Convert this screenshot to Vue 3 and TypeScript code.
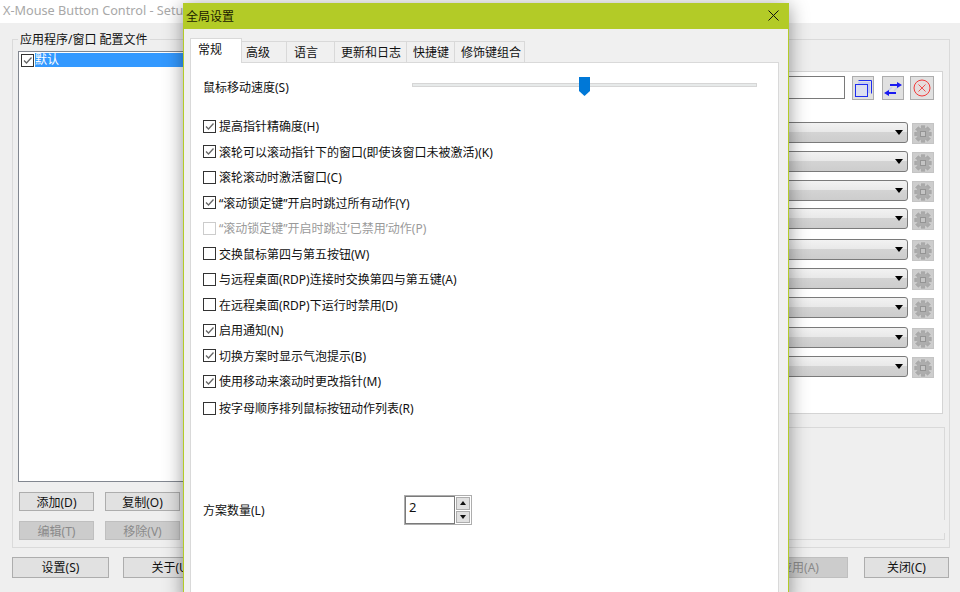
<script setup lang="ts">
interface Opt { text: string; checked?: boolean; disabled?: boolean; extra?: boolean }
const options: Opt[] = [
  { text: '提高指针精确度(H)', checked: true },
  { text: '滚轮可以滚动指针下的窗口(即使该窗口未被激活)(K)', checked: true },
  { text: '滚轮滚动时激活窗口(C)' },
  { text: '“滚动锁定键”开启时跳过所有动作(Y)', checked: true },
  { text: '“滚动锁定键”开启时跳过‘已禁用’动作(P)', disabled: true },
  { text: '交换鼠标第四与第五按钮(W)' },
  { text: '与远程桌面(RDP)连接时交换第四与第五键(A)' },
  { text: '在远程桌面(RDP)下运行时禁用(D)' },
  { text: '启用通知(N)', checked: true },
  { text: '切换方案时显示气泡提示(B)', checked: true },
  { text: '使用移动来滚动时更改指针(M)', checked: true },
  { text: '按字母顺序排列鼠标按钮动作列表(R)', extra: true },
]
const tabs = [
  { name: '常规', w: 52, pad: 7 },
  { name: '高级', w: 45, pad: 4 },
  { name: '语言', w: 48, pad: 7 },
  { name: '更新和日志', w: 72, pad: 6 },
  { name: '快捷键', w: 48, pad: 6 },
  { name: '修饰键组合', w: 70, pad: 6 },
]
const comboGaps = [0, 8, 8, 7, 10, 8, 8, 9, 8]
const gearTeeth = [0, 45, 90, 135, 180, 225, 270, 315]
</script>

<template>
  <div class="screen">
    <div class="apptitle">X-Mouse Button Control - Setup</div>
    <div class="main">
      <div class="group">
        <span class="legend">应用程序/窗口 配置文件</span>
        <div class="left">
          <div class="list">
            <div class="list-row">
              <span class="box list-box">
                <svg viewBox="0 0 11 11" class="tick"><path d="M2 5.500 L4.500 8 L9.500 2.500" /></svg>
              </span>
              <span class="sel">默认</span>
            </div>
          </div>
          <div class="btn-row">
            <button class="btn small">添加(D)</button>
            <button class="btn small">复制(O)</button>
          </div>
          <div class="btn-row">
            <button class="btn small off">编辑(T)</button>
            <button class="btn small off">移除(V)</button>
          </div>
        </div>
        <div class="right">
          <div class="panel">
            <div class="panel-top">
              <div class="textbox"></div>
              <div class="icon-btn">
                <svg viewBox="0 0 20 22" width="20" height="22">
                  <rect x="5" y="5" width="12" height="11" fill="#c3ccf2" />
                  <path d="M5.500 3.500H18.500V16.500" fill="none" stroke="#1e2cf0" />
                  <rect x="2.500" y="7.500" width="12" height="12" fill="#dcdff0" stroke="#1e2cf0" />
                </svg>
              </div>
              <div class="icon-btn gap8">
                <svg viewBox="0 0 20 22" width="20" height="22">
                  <path d="M4 15L9 10M16 9L11 14" fill="none" stroke="#c9cceb" stroke-width="1.500" />
                  <path d="M7 7H14V5L19 8 14 11V9H7Z" fill="#1a1af0" />
                  <path d="M13 15H6V13L1 16 6 19V17H13Z" fill="#1a1af0" />
                </svg>
              </div>
              <div class="icon-btn gap6">
                <svg viewBox="0 0 22 22" width="22" height="22">
                  <circle cx="11" cy="11" r="8" fill="#e6dcdc" stroke="#f23a3a" />
                  <path d="M7.500 7.500L14.500 14.500M14.500 7.500L7.500 14.500" stroke="#ef5050" />
                </svg>
              </div>
            </div>
            <div class="combos">
              <div v-for="(g, i) in comboGaps" :key="i" class="combo-row" :style="{ marginTop: g + 'px' }">
                <div class="combo"><span class="arrow"></span></div>
                <div class="gear">
                  <svg viewBox="0 0 20 20" width="20" height="20">
                    <rect
                      v-for="t in gearTeeth"
                      :key="t"
                      x="7.500"
                      y="1"
                      width="5"
                      height="4"
                      fill="#a9a9a9"
                      stroke="#dcdcdc"
                      stroke-width="0.500"
                      :transform="`rotate(${t} 10 10)`"
                    />
                    <circle cx="10" cy="10" r="6.500" fill="#adadad" />
                    <rect x="7.500" y="7.500" width="5" height="5" fill="#c4c4c4" stroke="#949494" />
                  </svg>
                </div>
              </div>
            </div>
          </div>
          <div class="lower"></div>
        </div>
      </div>
      <div class="foot">
        <button class="btn wide">设置(S)</button>
        <button class="btn wide">关于(U)</button>
        <button class="btn wide off push">应用(A)</button>
        <button class="btn close">关闭(C)</button>
      </div>
    </div>

    <div class="dialog">
      <div class="dlg-title">
        <span>全局设置</span>
        <svg class="x" viewBox="0 0 11 11" width="11" height="11">
          <path d="M.5 .5L10.500 10.500M10.500 .5L.5 10.500" stroke="#111" />
        </svg>
      </div>
      <div class="dlg-body">
        <div class="tabs">
          <div
            v-for="(t, i) in tabs"
            :key="t.name"
            class="tab"
            :class="{ active: i === 0 }"
            :style="{ width: t.w + 'px', paddingLeft: t.pad + 'px' }"
          >{{ t.name }}</div>
        </div>
        <div class="page">
          <div class="speed">
            <span class="speed-label">鼠标移动速度(S)</span>
            <div class="track">
              <svg class="thumb" viewBox="0 0 11 19" width="11" height="19">
                <path d="M0 0H11V14L5.500 19 0 14Z" fill="#0078d7" />
              </svg>
            </div>
          </div>
          <div class="opts">
            <label
              v-for="o in options"
              :key="o.text"
              class="opt"
              :class="{ dis: o.disabled, extra: o.extra }"
            >
              <span class="box">
                <svg v-if="o.checked" viewBox="0 0 11 11" class="tick"><path d="M2 5.500 L4.500 8 L9.500 2.500" /></svg>
              </span>
              <span>{{ o.text }}</span>
            </label>
          </div>
          <div class="count">
            <span class="count-label">方案数量(L)</span>
            <div class="spin">
              <div class="spin-input">2</div>
              <div class="spin-btns">
                <span class="spin-btn"><i class="up"></i></span>
                <span class="spin-btn"><i class="down"></i></span>
              </div>
            </div>
          </div>
        </div>
      </div>
    </div>
  </div>
</template>

<style scoped>
.screen {
  position: relative;
  width: 960px;
  height: 592px;
  overflow: hidden;
  background: #fff;
  font-family: "Noto Sans", "Noto Sans CJK SC", sans-serif;
  font-size: 12px;
  color: #111;
}
.apptitle {
  height: 23px;
  line-height: 20px;
  padding-left: 3px;
  font-size: 12.700px;
  color: #a8a8a8;
  white-space: nowrap;
}
.main {
  height: 569px;
  box-sizing: border-box;
  background: #efefef;
  padding: 16px 10px 0 12px;
}
.group {
  position: relative;
  box-sizing: border-box;
  height: 509px;
  border: 1px solid #dadada;
  display: flex;
}
.legend {
  position: absolute;
  left: 5px;
  top: -8px;
  padding: 0 2px;
  line-height: 16px;
  background: #efefef;
}
.left {
  width: 172px;
  padding: 11px 0 0 5px;
  flex: none;
}
.list {
  box-sizing: border-box;
  width: 172px;
  height: 431px;
  border: 1px solid #828790;
  background: #fff;
  padding: 1px 0 0 2px;
}
.list-row {
  display: flex;
  align-items: center;
  height: 14px;
}
.list-box {
  margin-right: 1px;
}
.sel {
  flex: 1;
  height: 14px;
  line-height: 13px;
  background: #3399ff;
  color: #fff;
}
.btn-row {
  display: flex;
  gap: 11px;
  margin-top: 10px;
  padding-left: 1px;
}
.btn {
  box-sizing: border-box;
  font: inherit;
  color: #111;
  padding: 0;
  border: 1px solid #adadad;
  background: #e1e1e1;
}
.btn.off {
  background: #cccccc;
  border-color: #bfbfbf;
  color: #8a8a8a;
}
.small {
  width: 75px;
  height: 19px;
  line-height: 16px;
  padding-top: 2px;
}
.right {
  flex: 1;
  min-width: 0;
  padding: 31px 0 0 18px;
}
.panel {
  box-sizing: border-box;
  height: 343px;
  margin-right: 6px;
  border: 1px solid #d4d4d4;
  background: #fff;
  padding: 4px 8px 0 0;
}
.panel-top {
  display: flex;
  justify-content: flex-end;
  height: 24px;
}
.textbox {
  box-sizing: border-box;
  flex: 1;
  height: 23px;
  border: 1px solid #7a7a7a;
  background: #fff;
  margin-right: 7px;
}
.icon-btn {
  box-sizing: border-box;
  width: 22px;
  height: 24px;
  border: 1px solid #adadad;
  background: #e1e1e1;
  display: flex;
  align-items: center;
  justify-content: center;
  flex: none;
}
.icon-btn.gap8 {
  margin-left: 8px;
}
.icon-btn.gap6 {
  margin-left: 6px;
  width: 24px;
}
.combos {
  margin-top: 22px;
}
.combo-row {
  display: flex;
  gap: 4px;
}
.combo {
  position: relative;
  box-sizing: border-box;
  flex: 1;
  height: 21px;
  border: 1px solid #7a7a7a;
  border-radius: 3px;
  background: linear-gradient(#f2f2f2 0, #e9e9e9 45%, #d4d4d4 46%, #cdcdcd 100%);
}
.arrow {
  position: absolute;
  right: 4px;
  top: 7px;
  border-left: 4px solid transparent;
  border-right: 4px solid transparent;
  border-top: 5px solid #000;
}
.gear {
  box-sizing: border-box;
  width: 22px;
  height: 21px;
  flex: none;
  margin: 1px 0 -1px;
  background: #cdcdcd;
  border: 1px solid #c4c4c4;
  display: flex;
  align-items: center;
  justify-content: center;
}
.lower {
  position: relative;
  box-sizing: border-box;
  height: 113px;
  margin: 13px 4px 0 0;
  border: 1px solid #d9d9d9;
}
.lower::after {
  content: "";
  position: absolute;
  right: -1px;
  top: 92px;
  width: 1px;
  height: 13px;
  background: #efefef;
}
.foot {
  display: flex;
  margin: 9px 1px 0 0;
}
.wide {
  width: 97px;
  height: 21px;
  line-height: 18px;
  margin-right: 14px;
}
.wide:nth-child(2) {
  margin-right: 0;
}
.push {
  margin-left: auto;
  margin-right: 16px;
}
.close {
  width: 85px;
  height: 21px;
  line-height: 18px;
}

.dialog {
  position: absolute;
  left: 183px;
  top: 3px;
  width: 606px;
  height: 600px;
  box-sizing: border-box;
  background: #f0f0f0;
  border: 1px solid #b3cb27;
  box-shadow: 0 3px 18px rgba(0, 0, 0, 0.42);
}
.dlg-title {
  box-sizing: border-box;
  height: 25px;
  background: #b3cb27;
  display: flex;
  align-items: center;
  justify-content: space-between;
  padding: 0 9px 2px 2px;
  color: #1a1a00;
}
.dlg-body {
  padding: 9px 9px 0 6px;
}
.tabs {
  display: flex;
  align-items: flex-end;
  height: 25px;
  position: relative;
  z-index: 1;
  margin-bottom: -1px;
}
.tab {
  box-sizing: border-box;
  height: 22px;
  border: 1px solid #d9d9d9;
  border-left-width: 0;
  line-height: 22px;
  background: #f0f0f0;
}
.tab.active {
  height: 25px;
  line-height: 22px;
  background: #fff;
  border-left-width: 1px;
  border-bottom: 0;
}
.page {
  box-sizing: border-box;
  height: 560px;
  background: #fff;
  border: 1px solid #d9d9d9;
  padding: 14px 0 0 12px;
}
.speed {
  display: flex;
  align-items: center;
  height: 20px;
}
.speed-label {
  width: 209px;
  flex: none;
}
.track {
  position: relative;
  box-sizing: border-box;
  width: 345px;
  height: 4px;
  margin-bottom: 4px;
  background: #e7eaea;
  border: 1px solid #d6d6d6;
}
.thumb {
  position: absolute;
  left: 166px;
  top: -7px;
}
.opts {
  margin-top: 16.500px;
}
.opt {
  display: flex;
  align-items: center;
  height: 25.500px;
  gap: 3px;
}
.opt.dis {
  color: #9a9a9a;
}
.opt.extra {
  margin-top: 1.500px;
}
.box {
  box-sizing: border-box;
  width: 13px;
  height: 13px;
  flex: none;
  border: 1px solid #333;
  background: #fff;
  display: block;
}
.opt.dis .box {
  border-color: #ccc;
}
.tick {
  display: block;
  width: 11px;
  height: 11px;
  fill: none;
  stroke: #666;
  stroke-width: 1.300px;
}
.count {
  display: flex;
  align-items: center;
  margin-top: 74px;
}
.count-label {
  width: 201px;
  flex: none;
}
.spin {
  box-sizing: border-box;
  display: flex;
  width: 68px;
  height: 30px;
  border: 1px solid #adadad;
  background: #fff;
}
.spin-input {
  box-sizing: border-box;
  width: 50px;
  height: 28px;
  border: 1px solid #7a7a7a;
  padding-left: 3px;
  line-height: 20px;
  font-size: 13px;
}
.spin-btns {
  flex: 1;
  display: flex;
  flex-direction: column;
  gap: 1px;
  padding: 1px;
}
.spin-btn {
  flex: 1;
  background: #e1e1e1;
  border: 1px solid #adadad;
  display: flex;
  align-items: center;
  justify-content: center;
}
.up,
.down {
  border-left: 3.500px solid transparent;
  border-right: 3.500px solid transparent;
}
.up {
  border-bottom: 4px solid #111;
}
.down {
  border-top: 4px solid #111;
}
.x {
  display: block;
}
</style>
